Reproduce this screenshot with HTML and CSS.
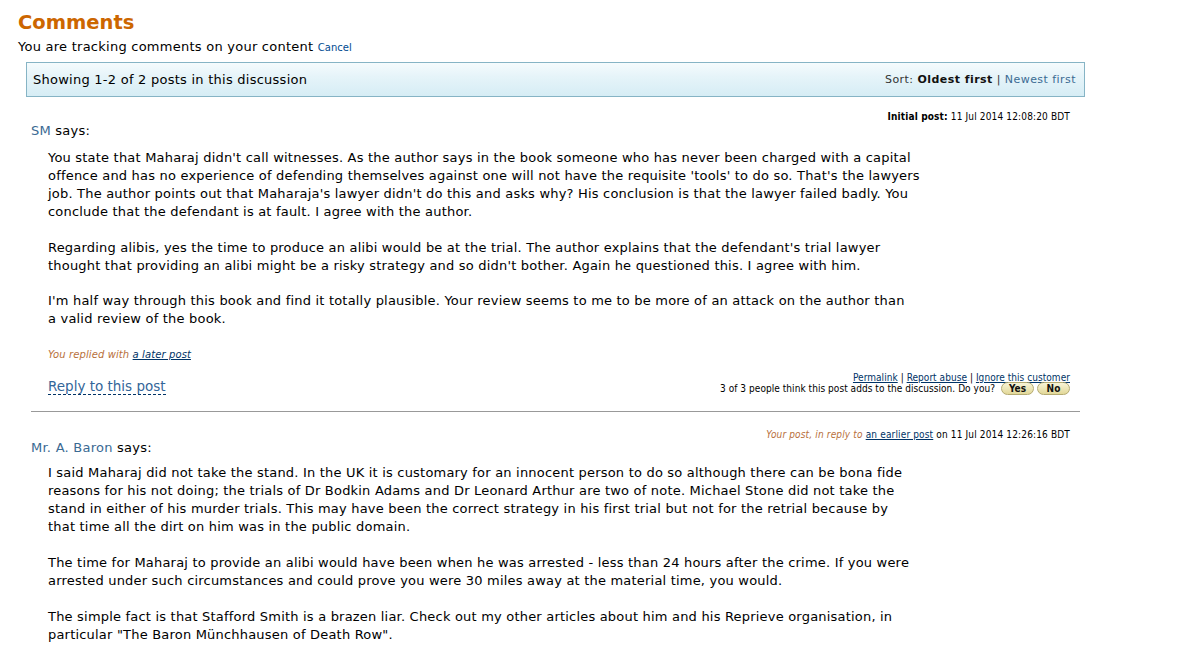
FILE: index.html
```html
<!DOCTYPE html>
<html>
<head>
<meta charset="utf-8">
<link rel="stylesheet" href="styles.css">
</head>
<body>
<div class="page">
  <h1 class="title">Comments</h1>
  <div class="tracking">You are tracking comments on your content <a class="cancel" href="#">Cancel</a></div>

  <div class="bar">
    <span class="showing">Showing 1-2 of 2 posts in this discussion</span>
    <span class="sort">Sort: <b>Oldest first</b> | <a href="#">Newest first</a></span>
  </div>

  <div class="post">
    <div class="meta"><b>Initial post:</b> 11 Jul 2014 12:08:20 BDT</div>
    <div class="author"><a href="#">SM</a> says:</div>
    <div class="body">
      <p>You state that Maharaj didn't call witnesses. As the author says in the book someone who has never been charged with a capital<br>offence and has no experience of defending themselves against one will not have the requisite 'tools' to do so. That's the lawyers<br>job. The author points out that Maharaja's lawyer didn't do this and asks why? His conclusion is that the lawyer failed badly. You<br>conclude that the defendant is at fault. I agree with the author.</p>
      <p>Regarding alibis, yes the time to produce an alibi would be at the trial. The author explains that the defendant's trial lawyer<br>thought that providing an alibi might be a risky strategy and so didn't bother. Again he questioned this. I agree with him.</p>
      <p>I'm half way through this book and find it totally plausible. Your review seems to me to be more of an attack on the author than<br>a valid review of the book.</p>
    </div>
    <div class="replied">You replied with <a href="#">a later post</a></div>
    <div class="actions">
      <a class="reply" href="#">Reply to this post</a>
      <div class="tools">
        <div class="links"><a href="#">Permalink</a> | <a href="#">Report abuse</a> | <a href="#">Ignore this customer</a></div>
        <div class="vote">3 of 3 people think this post adds to the discussion. Do you? <span class="btn">Yes</span><span class="btn">No</span></div>
      </div>
    </div>
  </div>

  <div class="post second">
    <div class="meta"><i class="yours">Your post, in reply to</i> <a href="#">an earlier post</a> on 11 Jul 2014 12:26:16 BDT</div>
    <div class="author"><a href="#">Mr. A. Baron</a> says:</div>
    <div class="body">
      <p>I said Maharaj did not take the stand. In the UK it is customary for an innocent person to do so although there can be bona fide<br>reasons for his not doing; the trials of Dr Bodkin Adams and Dr Leonard Arthur are two of note. Michael Stone did not take the<br>stand in either of his murder trials. This may have been the correct strategy in his first trial but not for the retrial because by<br>that time all the dirt on him was in the public domain.</p>
      <p>The time for Maharaj to provide an alibi would have been when he was arrested - less than 24 hours after the crime. If you were<br>arrested under such circumstances and could prove you were 30 miles away at the material time, you would.</p>
      <p>The simple fact is that Stafford Smith is a brazen liar. Check out my other articles about him and his Reprieve organisation, in<br>particular "The Baron Münchhausen of Death Row".</p>
    </div>
  </div>
</div>
</body>
</html>
```

FILE: styles.css
```css
html, body {
  margin: 0;
  padding: 0;
  background: #fff;
}
body {
  font-family: "DejaVu Sans", Verdana, sans-serif;
  color: #000;
  font-size: 13px;
}
a {
  color: #004b91;
  text-decoration: none;
}
.page {
  padding: 11px 0 0 18px;
  width: 1068px;
}
.title {
  margin: 0;
  font-size: 19.5px;
  line-height: 23px;
  color: #cc6600;
  font-weight: bold;
}
.tracking {
  margin-top: 4px;
  font-size: 13px;
  line-height: 18px;
  letter-spacing: 0.25px;
}
.cancel {
  font-size: 10px;
  letter-spacing: 0;
}
.bar {
  margin: 5px 0 0 8px;
  width: 1059px;
  height: 35px;
  box-sizing: border-box;
  border: 1px solid #86b4c5;
  background: linear-gradient(#f5fbfd, #e6f4f9 40%, #d6edf5);
  display: flex;
  align-items: center;
  justify-content: space-between;
  padding: 0 8px 0 6px;
}
.showing {
  font-size: 13px;
  letter-spacing: 0.25px;
}
.sort {
  font-size: 11px;
  letter-spacing: 0.45px;
  color: #333;
}
.sort b { color: #111; }
.sort a { color: #3b6b93; }
.post {
  margin-left: 13px;
  width: 1049px;
}
.meta {
  text-align: right;
  font-family: "DejaVu Sans Condensed", "DejaVu Sans", sans-serif;
  font-stretch: condensed;
  font-size: 10px;
  line-height: 12px;
  letter-spacing: 0.15px;
  padding: 14px 10px 0 0;
}
.author {
  font-size: 13px;
  line-height: 16px;
  letter-spacing: 0.25px;
}
.author a { color: #3a6a93; }
.body {
  padding: 10px 0 0 17px;
}
.body p {
  margin: 0 0 17.5px 0;
  line-height: 18px;
  letter-spacing: 0.2px;
  white-space: nowrap;
}
.replied {
  padding-left: 17px;
  font-size: 10px;
  line-height: 12px;
  font-style: italic;
  color: #b8703c;
  margin-top: 21px;
  letter-spacing: 0.1px;
}
.replied a, .meta a {
  color: #003366;
  text-decoration: underline;
}
.yours { color: #b8703c; }
.actions {
  display: flex;
  justify-content: space-between;
  align-items: flex-end;
  padding: 11px 10px 17px 17px;
  border-bottom: 1px solid #999;
}
.reply {
  font-size: 13.5px;
  color: #336699;
  text-decoration: none;
  border-bottom: 1px dashed #003366;
  line-height: 16px;
  margin-bottom: -1px;
}
.tools {
  text-align: right;
  font-family: "DejaVu Sans Condensed", "DejaVu Sans", sans-serif;
  font-stretch: condensed;
  font-size: 10px;
  line-height: 11px;
  letter-spacing: 0.05px;
}
.links a {
  text-decoration: underline;
  color: #003366;
}
.vote {
  display: flex;
  align-items: center;
  justify-content: flex-end;
  height: 11px;
  white-space: pre;
}
.btn {
  display: inline-block;
  box-sizing: border-box;
  margin-left: 3px;
  width: 33px;
  text-align: center;
  height: 13px;
  line-height: 11px;
  border: 1px solid #b5ab72;
  border-radius: 7px;
  background: linear-gradient(#f8f4d8, #e2d898);
  font-weight: bold;
  font-size: 10px;
  color: #111;
}
.second .meta {
  padding-top: 17px;
}
.second .author {
  margin-top: -1px;
}
.second .body {
  padding-top: 8px;
}
.second .body p {
  margin-bottom: 18px;
}
```
